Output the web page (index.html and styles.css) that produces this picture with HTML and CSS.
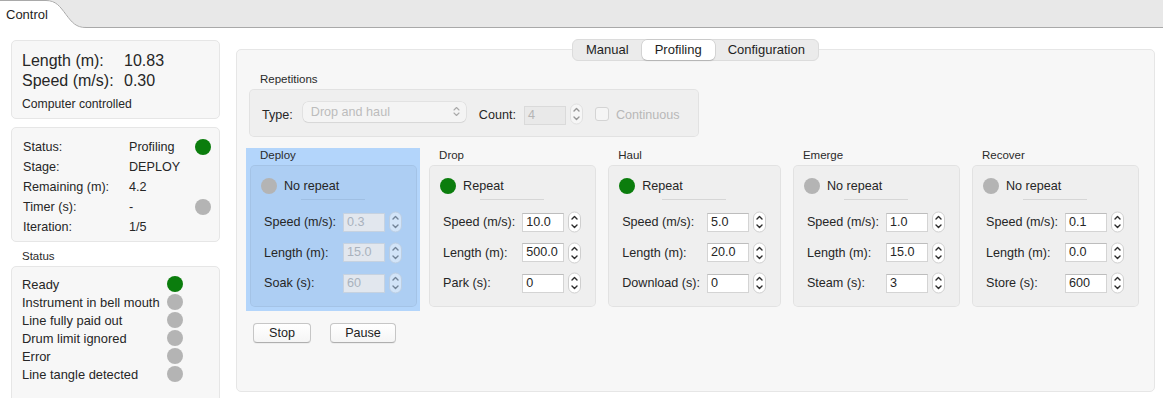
FILE: index.html
```html
<!DOCTYPE html>
<html lang="en">
<head>
  <meta charset="UTF-8">
  <meta name="viewport" content="width=device-width, initial-scale=1.0">
  <link rel="stylesheet" href="styles.css">
  <title>Winch Control</title>
</head>
<body>

<svg class="defs" aria-hidden="true">
  <symbol id="stepper" viewBox="0 0 13 22">
    <rect x="0.5" y="1" width="12" height="20" rx="6" fill="#fff" stroke="#cfcfcf"/>
    <path d="M4 8 L6.5 5.6 L9 8 M4 14 L6.5 16.4 L9 14" fill="none" stroke="#2b2b2b" stroke-width="1.4" stroke-linecap="round" stroke-linejoin="round"/>
  </symbol>
</svg>

<div class="tabbar">
  <div class="tab">
    <svg class="tab-shape" width="86" height="28" viewBox="0 0 86 28">
      <path d="M0 0 H46 C56 0 60 6 66 14 C72 22 76 27 86 27 V28 H0 Z" fill="#fff"/>
      <path d="M0 0.5 H46 C56 0.5 60 6.5 66 14.5 C72 22.5 76 27.5 86 27.5" fill="none" stroke="#a9a9a9"/>
    </svg>
    <span class="tab-label">Control</span>
  </div>
</div>

<div class="main">
  <div class="side">
    <div class="card readout">
      <div class="readout-row"><span class="readout-key">Length (m):</span><span>10.83</span></div>
      <div class="readout-row"><span class="readout-key">Speed (m/s):</span><span>0.30</span></div>
      <div class="readout-mode">Computer controlled</div>
    </div>

    <div class="card progress">
      <div class="progress-row"><span>Status:</span><span>Profiling</span><span class="dot dot-on"></span></div>
      <div class="progress-row"><span>Stage:</span><span>DEPLOY</span><span></span></div>
      <div class="progress-row"><span>Remaining (m):</span><span>4.2</span><span></span></div>
      <div class="progress-row"><span>Timer (s):</span><span>-</span><span class="dot"></span></div>
      <div class="progress-row"><span>Iteration:</span><span>1/5</span><span></span></div>
    </div>

    <div class="group-title side-title">Status</div>
    <div class="card flags">
      <div class="flag-row"><span>Ready</span><span class="dot dot-on"></span></div>
      <div class="flag-row"><span>Instrument in bell mouth</span><span class="dot"></span></div>
      <div class="flag-row"><span>Line fully paid out</span><span class="dot"></span></div>
      <div class="flag-row"><span>Drum limit ignored</span><span class="dot"></span></div>
      <div class="flag-row"><span>Error</span><span class="dot"></span></div>
      <div class="flag-row"><span>Line tangle detected</span><span class="dot"></span></div>
    </div>
  </div>

  <div class="content">
    <div class="segmented">
      <div class="seg">Manual</div>
      <div class="seg seg-on">Profiling</div>
      <div class="seg">Configuration</div>
    </div>

    <div class="panel">
      <div class="group-title">Repetitions</div>
      <div class="groupbox reps">
        <span>Type:</span>
        <div class="combo">
          <span>Drop and haul</span>
          <svg width="7" height="11" viewBox="0 0 7 11"><path d="M1 4 L3.5 1.5 L6 4 M1 7 L3.5 9.5 L6 7" fill="none" stroke="#aaa" stroke-width="1.1" stroke-linecap="round" stroke-linejoin="round"/></svg>
        </div>
        <span class="count-label">Count:</span>
        <span class="field field-off count-field">4</span>
        <svg class="stepper stepper-off" width="13" height="22"><use href="#stepper"/></svg>
        <span class="checkbox"></span>
        <span class="check-label">Continuous</span>
      </div>

      <div class="stages">
        <div class="stage stage-active">
          <div class="group-title">Deploy</div>
          <div class="groupbox stage-box">
            <div class="repeat"><span class="dot"></span>No repeat</div>
            <div class="sep"></div>
            <div class="fields">
              <span class="field-label">Speed (m/s):</span><span class="field field-off">0.3</span><svg class="stepper stepper-off" width="13" height="22"><use href="#stepper"/></svg>
              <span class="field-label">Length (m):</span><span class="field field-off">15.0</span><svg class="stepper stepper-off" width="13" height="22"><use href="#stepper"/></svg>
              <span class="field-label">Soak (s):</span><span class="field field-off">60</span><svg class="stepper stepper-off" width="13" height="22"><use href="#stepper"/></svg>
            </div>
          </div>
        </div>

        <div class="stage">
          <div class="group-title">Drop</div>
          <div class="groupbox stage-box">
            <div class="repeat"><span class="dot dot-on"></span>Repeat</div>
            <div class="sep"></div>
            <div class="fields">
              <span class="field-label">Speed (m/s):</span><span class="field">10.0</span><svg class="stepper" width="13" height="22"><use href="#stepper"/></svg>
              <span class="field-label">Length (m):</span><span class="field">500.0</span><svg class="stepper" width="13" height="22"><use href="#stepper"/></svg>
              <span class="field-label">Park (s):</span><span class="field">0</span><svg class="stepper" width="13" height="22"><use href="#stepper"/></svg>
            </div>
          </div>
        </div>

        <div class="stage">
          <div class="group-title">Haul</div>
          <div class="groupbox stage-box">
            <div class="repeat"><span class="dot dot-on"></span>Repeat</div>
            <div class="sep"></div>
            <div class="fields">
              <span class="field-label">Speed (m/s):</span><span class="field">5.0</span><svg class="stepper" width="13" height="22"><use href="#stepper"/></svg>
              <span class="field-label">Length (m):</span><span class="field">20.0</span><svg class="stepper" width="13" height="22"><use href="#stepper"/></svg>
              <span class="field-label">Download (s):</span><span class="field">0</span><svg class="stepper" width="13" height="22"><use href="#stepper"/></svg>
            </div>
          </div>
        </div>

        <div class="stage">
          <div class="group-title">Emerge</div>
          <div class="groupbox stage-box">
            <div class="repeat"><span class="dot"></span>No repeat</div>
            <div class="sep"></div>
            <div class="fields">
              <span class="field-label">Speed (m/s):</span><span class="field">1.0</span><svg class="stepper" width="13" height="22"><use href="#stepper"/></svg>
              <span class="field-label">Length (m):</span><span class="field">15.0</span><svg class="stepper" width="13" height="22"><use href="#stepper"/></svg>
              <span class="field-label">Steam (s):</span><span class="field">3</span><svg class="stepper" width="13" height="22"><use href="#stepper"/></svg>
            </div>
          </div>
        </div>

        <div class="stage">
          <div class="group-title">Recover</div>
          <div class="groupbox stage-box">
            <div class="repeat"><span class="dot"></span>No repeat</div>
            <div class="sep"></div>
            <div class="fields">
              <span class="field-label">Speed (m/s):</span><span class="field">0.1</span><svg class="stepper" width="13" height="22"><use href="#stepper"/></svg>
              <span class="field-label">Length (m):</span><span class="field">0.0</span><svg class="stepper" width="13" height="22"><use href="#stepper"/></svg>
              <span class="field-label">Store (s):</span><span class="field">600</span><svg class="stepper" width="13" height="22"><use href="#stepper"/></svg>
            </div>
          </div>
        </div>
      </div>

      <div class="actions">
        <button class="btn btn-stop">Stop</button>
        <button class="btn btn-pause">Pause</button>
      </div>
    </div>
  </div>
</div>

</body>
</html>
```

FILE: styles.css
```css
body {
  margin: 0;
  width: 1163px;
  height: 398px;
  overflow: hidden;
  background-color: #fff;
  color: #262626;
  font-family: "Liberation Sans", Arial, sans-serif;
  font-size: 12.6px;
}

.defs {
  position: absolute;
  width: 0;
  height: 0;
}

/* top tab strip */
.tabbar {
  display: flex;
  height: 27px;
  background-color: #e8e8e8;
  border-bottom: 1px solid #a9a9a9;
}

.tab {
  position: relative;
  width: 86px;
  height: 28px;
  margin-bottom: -1px;
}

.tab-shape {
  position: absolute;
  left: 0;
  top: 0;
}

.tab-label {
  position: relative;
  display: block;
  padding: 7px 0 0 6px;
  font-size: 13px;
  line-height: 15px;
  color: #1e1e1e;
}

.main {
  display: flex;
  gap: 16px;
  padding: 12px 8px 0 11px;
}

/* left column */
.side {
  width: 209px;
  flex: none;
  display: flex;
  flex-direction: column;
}

.card {
  background-color: #f7f7f7;
  border: 1px solid #e6e6e6;
  border-radius: 5px;
}

.readout {
  padding: 10px 10px 6px;
}

.readout-row {
  display: flex;
  font-size: 16px;
  line-height: 20px;
}

.readout-key {
  width: 102px;
}

.readout-mode {
  margin-top: 5px;
  font-size: 12.2px;
  line-height: 16px;
}

.progress {
  margin-top: 8px;
  padding: 9px 8px 4px 11px;
}

.progress-row {
  display: grid;
  grid-template-columns: 106px 1fr 16px;
  align-items: center;
  height: 20px;
}

.dot {
  flex: none;
  width: 16px;
  height: 16px;
  border-radius: 50%;
  background-color: #b4b4b4;
}

.dot-on {
  background-color: #0b7d0d;
}

.group-title {
  font-size: 11.5px;
  line-height: 14px;
  padding-left: 11px;
  color: #2a2a2a;
}

.side-title {
  margin: 7px 0 3px;
}

.flags {
  padding: 8px 0 30px 10px;
  font-size: 12.9px;
}

.flag-row {
  display: grid;
  grid-template-columns: 145px 16px;
  align-items: center;
  height: 18px;
  white-space: nowrap;
}

/* right column */
.content {
  flex: 1;
  min-width: 0;
  display: flex;
  flex-direction: column;
  align-items: center;
  margin-top: -1px;
}

.segmented {
  position: relative;
  z-index: 1;
  display: flex;
  align-items: center;
  height: 20px;
  background-color: #ebebeb;
  border: 1px solid #dcdcdc;
  border-radius: 6px;
}

.seg {
  padding: 0 13px;
  font-size: 13px;
  line-height: 20px;
  color: #1e1e1e;
}

.seg-on {
  background-color: #fff;
  border-radius: 5px;
  box-shadow: 0 0 0 0.5px rgba(0, 0, 0, 0.16), 0 1px 1.5px rgba(0, 0, 0, 0.12);
}

.panel {
  align-self: stretch;
  box-sizing: border-box;
  height: 343px;
  margin-top: -12px;
  padding: 22px 12px 0 12px;
  background-color: #f7f7f7;
  border: 1px solid #e6e6e6;
  border-radius: 5px;
}

.groupbox {
  background-color: rgba(0, 0, 0, 0.03);
  border: 1px solid rgba(0, 0, 0, 0.055);
  border-radius: 5px;
}

.reps {
  display: flex;
  align-items: center;
  box-sizing: border-box;
  width: 450px;
  height: 48px;
  margin-top: 3px;
  padding: 4px 0 0 12px;
  white-space: nowrap;
}

.combo {
  display: flex;
  align-items: center;
  justify-content: space-between;
  box-sizing: border-box;
  width: 163px;
  height: 20px;
  margin: -7px 0 0 10px;
  padding: 0 6px 0 8px;
  background-color: #f4f4f4;
  border-radius: 5px;
  box-shadow: 0 0 0 0.5px rgba(0, 0, 0, 0.1), 0 1px 1px rgba(0, 0, 0, 0.05);
  color: #bcbcbc;
}

.count-label {
  margin-left: 13px;
}

.count-field {
  margin-left: 8px;
  width: 42px;
}

.reps .stepper {
  margin: -3px 0 0 4px;
}

.checkbox {
  width: 12px;
  height: 12px;
  margin: -2px 0 0 12px;
  background-color: #f5f5f5;
  border: 1px solid #d4d4d4;
  border-radius: 3px;
}

.check-label {
  margin-left: 7px;
  color: #b8b8b8;
}

/* stage columns */
.stages {
  display: flex;
  align-items: flex-start;
  gap: 5px;
  margin: 11px 0 0 -3px;
}

.stage {
  padding: 0 3px 4px 4px;
}

.stage .group-title {
  padding-left: 10px;
}

.stage-active {
  background-color: #b3d5fb;
}

.stage-box {
  margin-top: 3px;
  padding: 12px 14px 12px 13px;
}

.repeat {
  display: flex;
  align-items: center;
  gap: 7px;
  height: 16px;
  margin-left: -3px;
  white-space: nowrap;
}

.sep {
  width: 64px;
  height: 1px;
  margin: 5px auto 0;
  background-color: #d6d6d6;
}

.stage-active .sep {
  background-color: #9fbfe3;
}

.fields {
  display: grid;
  grid-template-columns: auto 42px 13px;
  grid-auto-rows: 22px;
  align-items: center;
  column-gap: 4px;
  row-gap: 8.5px;
  margin-top: 11px;
}

.field-label {
  padding-right: 3px;
  white-space: nowrap;
}

.field {
  display: block;
  box-sizing: border-box;
  height: 19px;
  padding-left: 3px;
  background-color: #fff;
  border: 1px solid #d4d4d4;
  border-top-color: #bdbdbd;
  line-height: 17px;
}

.field-off {
  background-color: #e9e9e9;
  border-color: #dadada;
  color: #b5b5b5;
}

.stage-active .field-off {
  background-color: #e2e7ee;
  border-color: #c6d2e0;
  color: #a9b2bd;
}

.stepper {
  display: block;
  flex: none;
}

.stepper-off {
  opacity: 0.45;
}

.actions {
  display: flex;
  gap: 19px;
  margin: 12px 0 0 4px;
}

.btn {
  height: 20px;
  padding: 0;
  font-family: inherit;
  font-size: 12.6px;
  color: #222;
  background: linear-gradient(#fff, #f5f5f5);
  border: 1px solid #c6c6c6;
  border-bottom-color: #afafaf;
  border-radius: 4px;
  box-shadow: 0 1px 0 rgba(0, 0, 0, 0.04);
}

.btn-stop {
  width: 58px;
}

.btn-pause {
  width: 66px;
}
```
